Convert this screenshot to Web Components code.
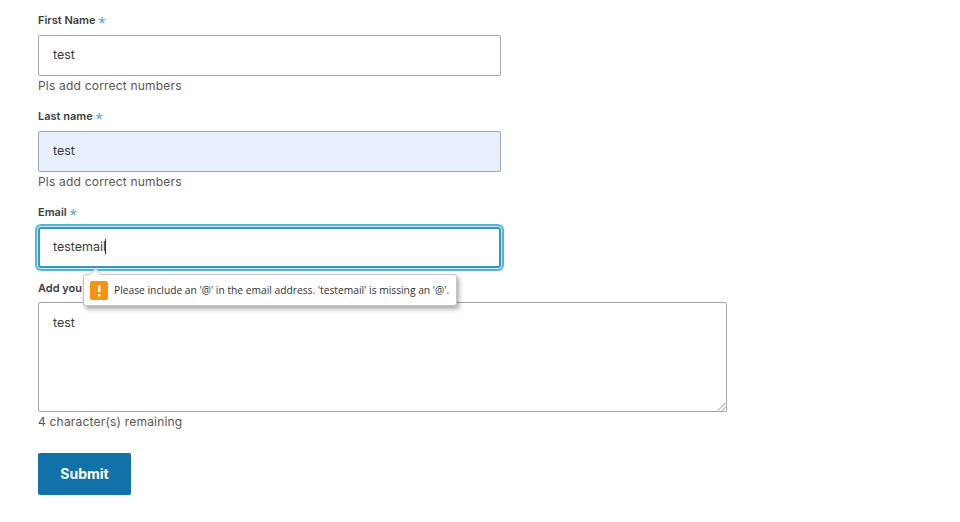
<!DOCTYPE html>
<html lang="en">
<head>
<meta charset="utf-8">
<title>Form</title>
<style>
	html, body { margin: 0; background: #fff; }
	body { font-family: Inter, "Liberation Sans", sans-serif; color: #444; }
</style>
</head>
<body>
<contact-form>
	<form-field label="First Name" help="Pls add correct numbers">test</form-field>
	<form-field label="Last name" help="Pls add correct numbers" state="autofill">test</form-field>
	<form-field label="Email" state="focus">testemail<validation-bubble slot="overlay">Please include an '@' in the email address. 'testemail' is missing an '@'.</validation-bubble></form-field>
	<form-field label="Add you" help="4 character(s) remaining" kind="textarea">test</form-field>
	<submit-button>Submit</submit-button>
</contact-form>
<script>
class ContactForm extends HTMLElement {
	connectedCallback() {
		const shadowRoot = this.attachShadow({ mode: "open" });
		shadowRoot.innerHTML = `
			<style>
				:host {
					display: flex;
					flex-direction: column;
					align-items: flex-start;
					padding: 13px 0 0 38px;
				}
			</style>
			<slot></slot>
		`;
	}
}

class FormField extends HTMLElement {
	connectedCallback() {
		const shadowRoot = this.attachShadow({ mode: "open" });
		const label = this.getAttribute("label");
		const help = this.getAttribute("help");
		shadowRoot.innerHTML = `
			<style>
				:host {
					display: block;
					position: relative;
					width: 463px;
					height: 96px;
				}
				:host([state="focus"]) { height: 76px; }
				:host([kind="textarea"]) {
					width: 689px;
					height: 153px;
				}
				:host([kind="textarea"]) .req { display: none; }
				.label {
					height: 15px;
					font-size: 11px;
					line-height: 15px;
					font-weight: 600;
					color: #3d3d3d;
				}
				.req {
					display: inline-block;
					height: 15px;
					vertical-align: top;
					font-family: "Liberation Sans", sans-serif;
					font-weight: 400;
					color: #5aa9cf;
					font-size: 19px;
					line-height: 21px;
				}
				.box {
					box-sizing: border-box;
					height: 41px;
					margin-top: 7px;
					padding: 0 14px 2px;
					display: flex;
					align-items: center;
					background: #fff;
					border: 1px solid #a6a6a6;
					border-radius: 2px;
					font-size: 12.5px;
					color: #3a3a3a;
				}
				:host([state="autofill"]) .box { background: #e8f0fe; }
				:host([state="focus"]) .box {
					border: 2px solid #3496c2;
					box-shadow: 0 0 0 1px #cfeaf4, 0 0 0 3px #55b3d9;
					border-radius: 3px;
					padding: 0 13px 2px;
				}
				:host([kind="textarea"]) .box {
					position: relative;
					height: 110px;
					margin-top: 6px;
					align-items: flex-start;
					padding-top: 12px;
				}
				.grip {
					display: none;
					position: absolute;
					right: 0;
					bottom: 0;
				}
				:host([kind="textarea"]) .grip { display: block; }
				.caret {
					display: none;
					width: 1px;
					height: 15px;
					margin-left: -1px;
					background: #333;
				}
				:host([state="focus"]) .caret { display: block; }
				.help {
					margin-top: 2px;
					font-size: 12px;
					line-height: 15px;
					letter-spacing: 0.2px;
					color: #565656;
				}
			</style>
			<div class="label">${label} <span class="req">*</span></div>
			<div class="box">
				<slot></slot><span class="caret"></span>
				<svg class="grip" width="9" height="9" viewBox="0 0 9 9" fill="none" stroke="#8a8a8a">
					<path d="M1 8.5 8.5 1M5 8.5 8.5 5"/>
				</svg>
			</div>
			${help ? `<div class="help">${help}</div>` : ""}
			<slot name="overlay"></slot>
		`;
	}
}

class ValidationBubble extends HTMLElement {
	connectedCallback() {
		const shadowRoot = this.attachShadow({ mode: "open" });
		shadowRoot.innerHTML = `
			<style>
				:host {
					position: absolute;
					left: 45px;
					top: 69px;
					z-index: 2;
					box-sizing: border-box;
					width: 374px;
					height: 32px;
					display: flex;
					align-items: center;
					gap: 6px;
					padding: 0 7px 0 6px;
					background: #fff;
					border: 1px solid #c4c4c4;
					border-radius: 3px;
					box-shadow: 2px 3px 5px rgba(0, 0, 0, 0.35);
					font-family: "Open Sans", "Noto Sans", sans-serif;
					font-size: 10.25px;
					white-space: nowrap;
					color: #333;
				}
				.arrow {
					position: absolute;
					left: 7px;
					top: -5px;
					width: 8px;
					height: 8px;
					background: #fff;
					border-left: 1px solid #c4c4c4;
					border-top: 1px solid #c4c4c4;
					transform: rotate(45deg);
				}
				svg { flex: none; }
			</style>
			<span class="arrow"></span>
			<svg width="18" height="19" viewBox="0 0 18 19">
				<rect width="18" height="19" rx="2" fill="#f8920f"/>
				<rect x="8" y="4" width="2.4" height="7" fill="#fff"/>
				<rect x="8" y="13" width="2.4" height="2.4" fill="#fff"/>
			</svg>
			<slot></slot>
		`;
	}
}

class SubmitButton extends HTMLElement {
	connectedCallback() {
		const shadowRoot = this.attachShadow({ mode: "open" });
		shadowRoot.innerHTML = `
			<style>
				:host {
					display: flex;
					align-items: center;
					justify-content: center;
					box-sizing: border-box;
					width: 93px;
					height: 42px;
					margin-top: 19px;
					padding-bottom: 2px;
					background: #1271a8;
					border-radius: 2px;
					color: #fff;
					font-size: 14px;
					font-weight: 700;
				}
			</style>
			<slot></slot>
		`;
	}
}

customElements.define("contact-form", ContactForm);
customElements.define("form-field", FormField);
customElements.define("validation-bubble", ValidationBubble);
customElements.define("submit-button", SubmitButton);
</script>
</body>
</html>
